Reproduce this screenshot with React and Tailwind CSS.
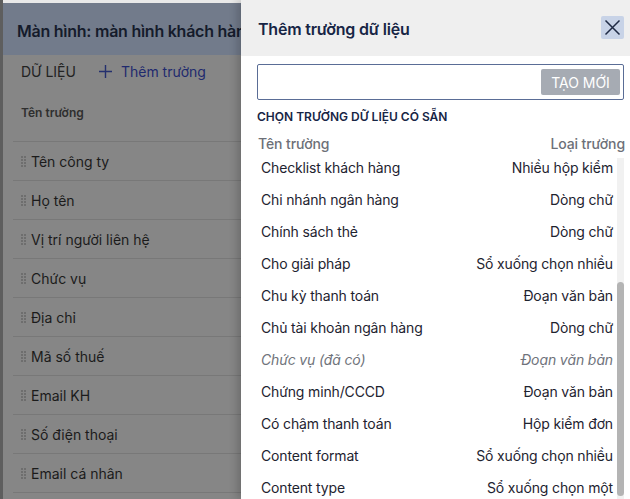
import React from "react";

const leftRows = [
  "Tên công ty",
  "Họ tên",
  "Vị trí người liên hệ",
  "Chức vụ",
  "Địa chỉ",
  "Mã số thuế",
  "Email KH",
  "Số điện thoại",
  "Email cá nhân",
];

const fields = [
  ["Checklist khách hàng", "Nhiều hộp kiểm"],
  ["Chi nhánh ngân hàng", "Dòng chữ"],
  ["Chính sách thẻ", "Dòng chữ"],
  ["Cho giải pháp", "Sổ xuống chọn nhiều"],
  ["Chu kỳ thanh toán", "Đoạn văn bản"],
  ["Chủ tài khoản ngân hàng", "Dòng chữ"],
  ["Chức vụ (đã có)", "Đoạn văn bản", true],
  ["Chứng minh/CCCD", "Đoạn văn bản"],
  ["Có chậm thanh toán", "Hộp kiểm đơn"],
  ["Content format", "Sổ xuống chọn nhiều"],
  ["Content type", "Sổ xuống chọn một"],
];

function Handle() {
  return (
    <svg width="5" height="11" viewBox="0 0 5 11" className="shrink-0">
      {[1, 4, 7, 10].map((y) =>
        [1, 4].map((x) => (
          <rect key={`${x}-${y}`} x={x - 0.6} y={y - 0.6} width="1.2" height="1.2" fill="#454545" />
        ))
      )}
    </svg>
  );
}

export default function App() {
  return (
    <div
      className="flex w-[630px] h-[499px] overflow-hidden bg-white"
      style={{ fontFamily: "Inter, 'Noto Sans', sans-serif" }}
    >
      {/* Dimmed background page */}
      <div className="w-[241px] shrink-0 h-full flex flex-col border-l-[3px] border-[#5e5e5e] bg-[#868686] overflow-hidden">
        <div className="h-[3px] bg-[#e9e9e9]" />
        <div className="h-[52px] bg-[#727b8b] flex items-center pl-[14px] pt-[4px] whitespace-nowrap">
          <span className="text-[16px] font-semibold text-[#151b2b] tracking-[-0.25px]">
            Màn hình: màn hình khách hàng
          </span>
        </div>
        <div className="flex items-center h-[33px] pl-[18px] gap-[22px] whitespace-nowrap">
          <span className="text-[14px] text-[#222]">DỮ LIỆU</span>
          <span className="flex items-center gap-[8px] text-[14px] text-[#1f2a6e]">
            <svg width="15" height="15" viewBox="0 0 15 15">
              <path d="M7.5 1v13M1 7.5h13" stroke="#24306e" strokeWidth="1.4" />
            </svg>
            Thêm trường
          </span>
        </div>
        <div className="h-[53px] flex items-center pl-[18px] pb-[4px]">
          <span className="text-[12px] font-semibold text-[#2f2f2f]">Tên trường</span>
        </div>
        <div className="pl-[10px]">
          {leftRows.map((r) => (
            <div
              key={r}
              className="h-[39px] border-t border-[#787878] flex items-center gap-[5px] pl-[8px] pt-[1px] whitespace-nowrap"
            >
              <Handle />
              <span className="text-[14px] text-[#1b1b1b]">{r}</span>
            </div>
          ))}
          <div className="border-t border-[#787878]" />
        </div>
      </div>

      {/* Drawer */}
      <div className="relative w-[389px] shrink-0 h-full flex flex-col bg-white shadow-[-4px_0_8px_rgba(0,0,0,0.18)]">
        <div className="h-[56px] bg-[#efefef] flex items-center justify-between pl-[17px] pr-[6px]">
          <span className="text-[16px] font-semibold text-[#172545] tracking-[-0.2px] pt-[2px]">Thêm trường dữ liệu</span>
          <button className="w-[23px] h-[23px] rounded-[2px] bg-[#c8d3e7] flex items-center justify-center mb-[2px]">
            <svg width="17" height="17" viewBox="0 0 17 17">
              <path d="M1.5 1.5l14 14M15.5 1.5l-14 14" stroke="#1f2a44" strokeWidth="1.5" />
            </svg>
          </button>
        </div>
        <div className="pl-[16px] pr-[5px] pt-[8px] flex flex-col flex-1 min-h-0">
          <div className="h-[36px] mr-[1px] border border-[#5a6d96] rounded-[2px] flex items-center justify-end pr-[3px]">
            <div className="h-[26px] w-[79px] bg-[#a6abb3] rounded-[2px] flex items-center justify-center text-[14px] text-white">
              TẠO MỚI
            </div>
          </div>
          <div className="mt-[9px] h-[16px] flex items-center text-[12px] font-semibold text-[#172545]">
            CHỌN TRƯỜNG DỮ LIỆU CÓ SẴN
          </div>
          <div className="mt-[9px] h-[18px] flex items-center justify-between text-[14px] font-medium text-[#6d7078] tracking-[-0.1px]">
            <span className="pl-[1px]">Tên trường</span>
            <span>Loại trường</span>
          </div>
          <div className="flex flex-1 min-h-0 gap-[4px] mt-[-1px]">
            <div className="w-[356px] flex flex-col">
              {fields.map(([n, t, dis]) => (
                <div
                  key={n}
                  className={`h-[32px] shrink-0 flex items-center justify-between pl-[4px] text-[14px] tracking-[-0.15px] whitespace-nowrap ${
                    dis ? "italic text-[#6f737b]" : "text-[#1e2330]"
                  }`}
                >
                  <span>{n}</span>
                  <span>{t}</span>
                </div>
              ))}
            </div>
            <div className="w-[7px] mt-[7px] bg-[#f1f1f1] flex flex-col">
              <div className="h-[124px]" />
              <div className="h-[214px] rounded-full bg-[#b4b4b4]" />
            </div>
          </div>
        </div>
      </div>
    </div>
  );
}
